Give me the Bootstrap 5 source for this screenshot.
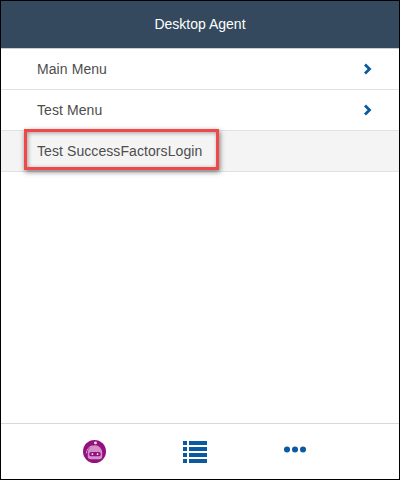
<!DOCTYPE html>
<html lang="en">
  <head>
    <meta charset="UTF-8" />
    <meta name="viewport" content="width=device-width, initial-scale=1.0" />
    <link href="https://cdn.jsdelivr.net/npm/bootstrap@5.3.1/dist/css/bootstrap.min.css" rel="stylesheet" />
    <title>Desktop Agent</title>
    <style>
      html, body { height: 100%; }
      body { font-family: "Liberation Sans", Arial, sans-serif; font-size: 14px; background: #fff; }
      .agent-frame { height: 480px; width: 400px; border: 1px solid #000; }
      .agent-header { height: 48px; flex: none; background: #34495e; color: #fff; border-bottom: 1px solid #c9cdd1; }
      .agent-list .list-group-item { height: 41px; padding: 0 26px 0 36px; border-color: #e1e1e1; color: #4d4d4d; font-size: 14px; letter-spacing: .08px; }
      .agent-list .active-row { background: #f4f4f4; }
      .agent-chevron { width: 10px; height: 12px; }
      .agent-footer { height: 56px; flex: none; border-top: 1px solid #d8d8d8; padding-right: 11px; }
      .agent-tab { width: 100.5px; }
      .agent-dots { margin-bottom: 4px; }
      .agent-callout { position: absolute; left: 23px; top: 128px; width: 195px; height: 41px; border: 3px solid #f04848; box-shadow: 1px 2px 5px rgba(0,0,0,.5), inset 1px 1px 4px rgba(0,0,0,.35); pointer-events: none; }
    </style>
  </head>
  <body class="m-0">
    <div class="agent-frame d-flex flex-column position-relative">
      <div class="agent-header d-flex align-items-center justify-content-center">Desktop Agent</div>
      <div class="list-group list-group-flush agent-list flex-grow-1">
        <div class="list-group-item d-flex align-items-center justify-content-between">
          <span>Main Menu</span>
          <svg class="agent-chevron" viewBox="0 0 10 12"><path d="M2 1.500 6.500 6 2 10.500" fill="none" stroke="#0a5aa0" stroke-width="2.8"/></svg>
        </div>
        <div class="list-group-item d-flex align-items-center justify-content-between">
          <span>Test Menu</span>
          <svg class="agent-chevron" viewBox="0 0 10 12"><path d="M2 1.500 6.500 6 2 10.500" fill="none" stroke="#0a5aa0" stroke-width="2.8"/></svg>
        </div>
        <div class="list-group-item active-row d-flex align-items-center border-bottom">
          <span>Test SuccessFactorsLogin</span>
        </div>
      </div>
      <div class="agent-callout"></div>
      <div class="agent-footer d-flex align-items-center justify-content-center">
        <div class="agent-tab d-flex justify-content-center">
          <svg width="23" height="23" viewBox="0 0 24 24">
            <circle cx="12" cy="12" r="12" fill="#93117e"/>
            <circle cx="13" cy="3" r="1.500" fill="#f0d8ec"/>
            <path d="M5 13a7.500 7.500 0 0 1 15 0v4a3 3 0 0 1-3 3H8a3 3 0 0 1-3-3z" fill="#d68fc9"/>
            <path d="M3.500 14a9 9 0 0 1 6-8" fill="none" stroke="#e8bfe0" stroke-width=".8"/>
            <rect x="6.500" y="12.500" width="12" height="4.500" rx="2" fill="#93117e"/>
            <circle cx="9.800" cy="14.700" r="1" fill="#fff"/>
            <circle cx="15.200" cy="14.700" r="1" fill="#fff"/>
          </svg>
        </div>
        <div class="agent-tab d-flex justify-content-center">
          <svg width="24" height="22" viewBox="0 0 24 22" fill="#0a5aa0">
            <rect x="0" y="0" width="4" height="4"/><rect x="6" y="0" width="18" height="4"/>
            <rect x="0" y="6" width="4" height="4"/><rect x="6" y="6" width="18" height="4"/>
            <rect x="0" y="12" width="4" height="4"/><rect x="6" y="12" width="18" height="4"/>
            <rect x="0" y="18" width="4" height="4"/><rect x="6" y="18" width="18" height="4"/>
          </svg>
        </div>
        <div class="agent-tab d-flex justify-content-center">
          <svg class="agent-dots" width="22" height="7" viewBox="0 0 22 7" fill="#0a5aa0">
            <circle cx="3" cy="3.500" r="3"/><circle cx="11" cy="3.500" r="3"/><circle cx="19" cy="3.500" r="3"/>
          </svg>
        </div>
      </div>
    </div>
    <script src="https://cdn.jsdelivr.net/npm/bootstrap@5.3.1/dist/js/bootstrap.bundle.min.js"></script>
  </body>
</html>
